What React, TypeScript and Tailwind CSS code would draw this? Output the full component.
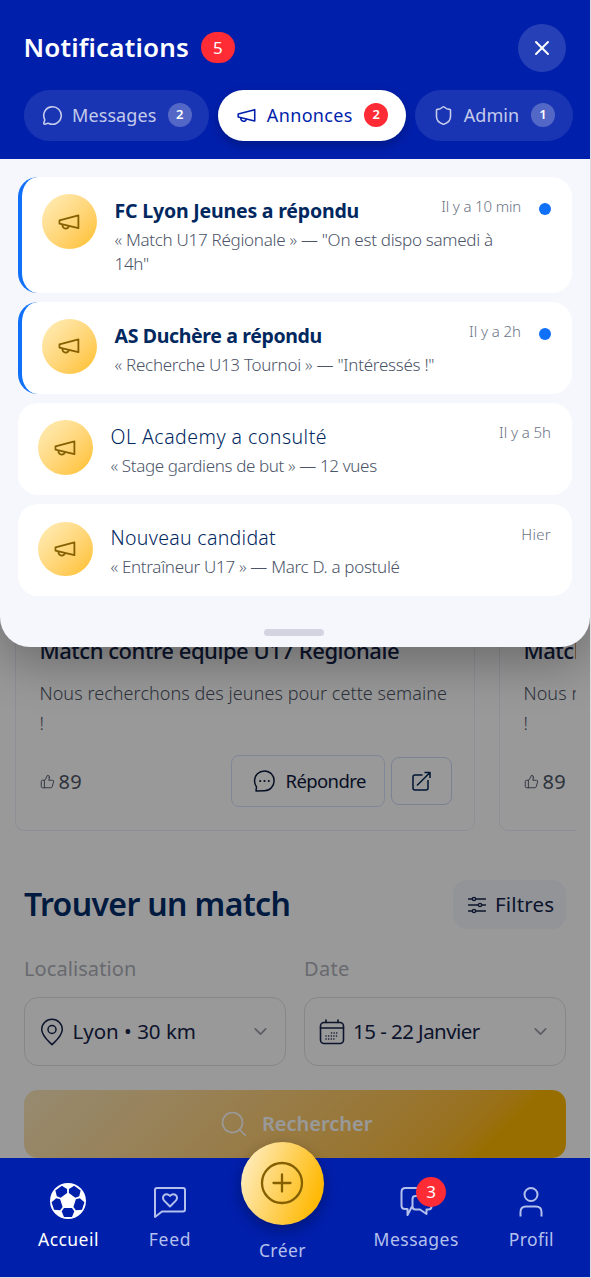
import { ChevronDown, MessageCircle, Shield, ThumbsUp, X } from "lucide-react";
import clsx from "clsx";

type Notification = {
  title: string;
  lines: string[];
  time: string;
  unread: boolean;
  titleClass: string;
  lineClass: string;
  timeClass: string;
};

const notifications: Notification[] = [
  {
    title: "FC Lyon Jeunes a répondu",
    lines: ["« Match U17 Régionale » — \"On est dispo samedi à", "14h\""],
    time: "Il y a 10 min",
    unread: true,
    titleClass: "tracking-[-0.19px]",
    lineClass: "tracking-[-0.29px]",
    timeClass: "tracking-[-0.16px]",
  },
  {
    title: "AS Duchère a répondu",
    lines: ["« Recherche U13 Tournoi » — \"Intéressés !\""],
    time: "Il y a 2h",
    unread: true,
    titleClass: "tracking-[-0.36px]",
    lineClass: "tracking-[-0.27px]",
    timeClass: "tracking-[-0.06px]",
  },
  {
    title: "OL Academy a consulté",
    lines: ["« Stage gardiens de but » — 12 vues"],
    time: "Il y a 5h",
    unread: false,
    titleClass: "tracking-[0.48px]",
    lineClass: "tracking-[-0.37px]",
    timeClass: "tracking-[-0.06px]",
  },
  {
    title: "Nouveau candidat",
    lines: ["« Entraîneur U17 » — Marc D. a postulé"],
    time: "Hier",
    unread: false,
    titleClass: "tracking-[0.3px]",
    lineClass: "tracking-[-0.31px]",
    timeClass: "tracking-[0.3px]",
  },
];

function NotificationCard({ item }: { item: Notification }) {
  return (
    <div
      className={clsx(
        "flex rounded-[20px] bg-white py-[17.5px] px-[20.5px]",
        item.unread && "border-l-[4.5px] border-[#1070f8]"
      )}
    >
      <div className="w-[54.5px] h-[54.5px] shrink-0 rounded-full bg-linear-135 from-[#ffeeba] to-[#ffbf18] flex items-center justify-center text-[#856000]">
        <MegaphoneIcon className="w-6 h-6" />
      </div>
      <div className="ml-[18px] flex-1 min-w-0 whitespace-nowrap">
        <div className="flex items-start justify-between">
          <h3
            className={clsx(
              "pt-[1.5px] text-[19.5px] leading-[30px] text-[#00285f]",
              item.unread ? "font-bold" : "font-light",
              item.titleClass
            )}
          >
            {item.title}
          </h3>
          <span className={clsx("pt-px text-[15px] leading-[23.5px] font-light text-[#6b7385]", item.timeClass)}>
            {item.time}
          </span>
        </div>
        <p className={clsx("mt-[2px] text-[17px] leading-[23.7px] font-light text-[#4b5468]", item.lineClass)}>
          {item.lines.map((line) => (
            <span key={line} className="block">{line}</span>
          ))}
        </p>
      </div>
      {item.unread && <span className="ml-[18px] mt-[9px] w-3 h-3 shrink-0 rounded-full bg-[#1070f8]" />}
    </div>
  );
}

function MegaphoneIcon({ className }: { className?: string }) {
  return (
    <svg viewBox="0 0 24 24" className={className} fill="none" stroke="currentColor" strokeWidth="1.8" strokeLinejoin="round">
      <path d="M2.500 10.400 21.400 5.300v12.900L2.500 13.700z" />
      <path d="M5.400 14.400c-.2 5 6 5.600 6.400 1.400" />
    </svg>
  );
}

function PostCard() {
  return (
    <article className="w-[460px] h-[331px] shrink-0 flex flex-col justify-end rounded-[9px] border border-[#eceff9] pl-[23.5px] pr-[22.5px] pb-[23px] whitespace-nowrap">
      <h2 className="mb-[13px] text-[22px] leading-[30px] font-medium tracking-[-0.46px] text-[#14234a]">
        Match contre équipe U17 Régionale
      </h2>
      <p className="text-[18px] leading-[30px] font-light tracking-[0.06px] text-[#4d5568]">
        <span className="block">Nous recherchons des jeunes pour cette semaine</span>
        <span className="block">!</span>
      </p>
      <div className="mt-[17.5px] flex h-[52px] items-center">
        <ThumbsUp className="w-[15px] h-[15px] text-[#4d5568]" strokeWidth={1.5} />
        <span className="mt-px ml-1 text-[20px] leading-7 tracking-[0.3px] text-[#4d5568]">89</span>
        <button className="ml-auto flex h-[52px] w-[154px] items-center rounded-lg border border-[#d6e2fa] pl-[20px] text-[#0d1a3d]">
          <svg viewBox="0 0 24 24" className="w-6 h-6" fill="none" stroke="currentColor" strokeWidth="1.5" strokeLinecap="round" strokeLinejoin="round">
            <path d="M12.500 2C7 2 2.500 6.200 2.500 11.700c0 3 1.200 5 2 6.200L4 22l8.500-.2c5.500 0 9.600-4.600 9.600-10C22.100 6.300 18 2 12.500 2z" />
            <path d="M8.200 12h.01M12.500 12h.01M16.800 12h.01" strokeWidth="2.200" />
          </svg>
          <span className="ml-[10px] text-[18.500px] tracking-[-0.6px]">Répondre</span>
        </button>
        <button className="ml-[6px] flex h-[48px] w-[61px] items-center justify-center rounded-lg border border-[#ccdaf7] text-[#002456]">
          <svg viewBox="0 0 20 20" className="w-5 h-5" fill="none" stroke="currentColor" strokeWidth="1.500" strokeLinejoin="round">
            <path d="M11.500 4H4a2 2 0 0 0-2 2v11a2 2 0 0 0 2 2h11a2 2 0 0 0 2-2V9" />
            <path d="M6 14.500 19 1.500M13.500 1.500H19V7" />
          </svg>
        </button>
      </div>
    </article>
  );
}

function FootballIcon() {
  const angles = [0, 72, 144, 216, 288];
  return (
    <svg viewBox="-54 -54 108 108" className="w-9 h-9">
      <circle r="54" fill="#fff" />
      {angles.map((a) => (
        <path key={a} d="M-12 21H12L19 31 12 48H-12L-19 31Z" fill="#001fab" transform={`rotate(${a})`} />
      ))}
    </svg>
  );
}

function Sheet() {
  return (
    <section className="absolute inset-x-0 top-0 h-[647px] rounded-b-[30px] bg-[#f5f7fc] shadow-[0_16px_50px_rgba(0,0,0,0.3)]">
      <header className="h-[158.5px] bg-[#001fab] pl-[23.5px] pr-[17px] pt-[23.5px]">
        <div className="flex items-center pr-[7px]">
          <h1 className="-mt-px text-[26px] leading-[36px] font-semibold tracking-[0.17px] text-white">Notifications</h1>
          <span className="ml-3 flex h-[31px] w-[34px] items-center justify-center rounded-full bg-[#ff2c36] text-[17px] text-white">
            5
          </span>
          <button className="ml-auto flex h-12 w-12 items-center justify-center rounded-full bg-white/15 text-white">
            <X size={24} strokeWidth={2} />
          </button>
        </div>
        <div className="mt-[18px] flex gap-[9px] text-[18px] text-white/75">
          <button className="flex h-[51px] w-[186px] items-center rounded-full bg-white/10 pl-[18px]">
            <MessageCircle size={21} strokeWidth={1.8} />
            <span className="ml-[9.5px] tracking-[0.1px]">Messages</span>
            <span className="ml-auto mr-[17.5px] flex h-6 w-6 items-center justify-center rounded-full bg-white/25 text-[13px] font-semibold text-white">2</span>
          </button>
          <button className="flex h-[51px] w-[188px] items-center rounded-full bg-white pl-[18px] text-[#001fab] shadow-[0_4px_10px_rgba(0,0,0,0.22)]">
            <MegaphoneIcon className="w-[21px] h-[21px]" />
            <span className="ml-[9.5px] tracking-[0.35px]">Annonces</span>
            <span className="ml-auto mr-[18px] flex h-6 w-6 items-center justify-center rounded-full bg-[#ff2c36] text-[13px] font-semibold text-white">2</span>
          </button>
          <button className="flex h-[51px] w-[158px] items-center rounded-full bg-white/10 pl-[18px]">
            <Shield size={21} strokeWidth={1.8} />
            <span className="ml-[9.5px] tracking-[0.1px]">Admin</span>
            <span className="ml-auto mr-[18px] flex h-6 w-6 items-center justify-center rounded-full bg-white/25 text-[13px] font-semibold text-white">1</span>
          </button>
        </div>
      </header>
      <div className="flex flex-col gap-[9px] pt-[18.3px] pl-[17.5px] pr-[18.5px]">
        {notifications.map((item) => (
          <NotificationCard key={item.title} item={item} />
        ))}
      </div>
      <div className="ml-[264px] mt-[33px] h-[6.5px] w-[60px] rounded-full bg-[#d3d4e0]" />
    </section>
  );
}

function BottomNav() {
  return (
    <nav className="absolute inset-x-0 bottom-0 flex h-[119px] items-start justify-between bg-[#001fab] pl-[38px] pr-[36px] text-[17.5px] leading-6 text-[#b4c0ec]">
      <a className="mt-[25px] flex flex-col items-center text-white">
        <FootballIcon />
        <span className="mt-[8px] tracking-[0.45px]">Accueil</span>
      </a>
      <a className="mt-[25px] flex flex-col items-center">
        <svg viewBox="0 0 36 36" className="w-9 h-9" fill="none" stroke="currentColor" strokeWidth="2" strokeLinejoin="round">
          <path d="M5 5h26a2 2 0 0 1 2 2v19.500a2 2 0 0 1-2 2H10L3 34V7a2 2 0 0 1 2-2z" />
          <path d="m18 23.500-5.600-5.600c-1.800-1.800-1.800-4.200-.3-5.600 1.600-1.500 4.300-1.400 5.900.7 1.600-2.100 4.300-2.200 5.900-.7 1.500 1.400 1.500 3.800-.3 5.600z" />
        </svg>
        <span className="mt-[8px] tracking-[0.7px]">Feed</span>
      </a>
      <a className="-mt-4 flex flex-col items-center">
        <span className="flex h-[82.5px] w-[82.5px] items-center justify-center rounded-full bg-linear-[110deg] from-[#ffeec4] from-5% to-[#ffba08] to-85% text-[#856000] shadow-[0_5px_14px_rgba(0,0,0,0.3)]">
          <svg viewBox="0 0 44 44" className="h-11 w-11" fill="none" stroke="currentColor" strokeWidth="2.300" strokeLinecap="round">
            <circle cx="22" cy="22" r="20" />
            <path d="M22 13.500v17M13.500 22h17" />
          </svg>
        </span>
        <span className="mt-[13px] tracking-[0.4px]">Créer</span>
      </a>
      <a className="mt-[25px] flex flex-col items-center">
        <span className="relative">
          <svg viewBox="0 0 36 36" className="w-9 h-9" fill="none" stroke="currentColor" strokeWidth="2" strokeLinejoin="round">
            <path d="M14 23.500 9.500 32v-6H7c-2 0-3.500-1.500-3.500-3.500V9c0-2.500 1.500-4 4-4h18c2.500 0 4 1.500 4 4v4" />
            <path d="M14.500 16c0-2 1-3 3-3h13c2 0 3 1 3 3v7.500c0 2-1 3-3 3H28.500V31L22 26.500h-4.500c-2 0-3-1-3-3z" />
          </svg>
          <span className="absolute -top-[6px] left-[18px] flex h-[30px] w-[30px] items-center justify-center rounded-full bg-[#ff2c36] text-[17px] text-white">
            3
          </span>
        </span>
        <span className="mt-[8px] tracking-[0.5px]">Messages</span>
      </a>
      <a className="mt-[25px] flex flex-col items-center">
        <svg viewBox="0 0 36 36" className="w-9 h-9" fill="none" stroke="currentColor" strokeWidth="2" strokeLinejoin="round">
          <circle cx="18" cy="11.500" r="6.500" />
          <path d="M7.500 33.500v-4.500c0-3.500 2-5.500 5.500-5.500h10c3.500 0 5.500 2 5.500 5.500v4.500" />
        </svg>
        <span className="mt-[8px] tracking-[0.35px]">Profil</span>
      </a>
    </nav>
  );
}

export default function App() {
  return (
    <div className="h-[1278px] w-[591px] bg-[#dcdce0] font-['Noto_Sans',sans-serif]">
      <div className="relative h-[1277px] w-[590px] overflow-hidden bg-white">
        <main className="pt-[500px]">
          {/* Posts */}
          <div className="ml-[15px] mr-[14px] flex gap-6 overflow-hidden">
            <PostCard />
            <PostCard />
          </div>

          {/* Find a match */}
          <section className="mt-[49px] px-6">
            <div className="flex items-center justify-between">
              <h2 className="-mt-[2px] text-[32px] leading-[44px] font-semibold tracking-[-0.64px] text-[#002d69]">Trouver un match</h2>
              <button className="flex h-[49px] w-[113px] items-center rounded-[14px] bg-[#f3f7fe] pl-[15px] text-[#14234a]">
                <svg viewBox="0 0 18 18" className="w-[18px] h-[18px]" fill="none" stroke="currentColor" strokeWidth="1.400" strokeLinecap="round">
                  <path d="M.5 3h3.700M7.800 3h9.700M.5 9h9.700M13.800 9h3.700M.5 15h3.700M7.800 15h9.700" />
                  <circle cx="6" cy="3" r="1.600" />
                  <circle cx="12" cy="9" r="1.600" />
                  <circle cx="6" cy="15" r="1.600" />
                </svg>
                <span className="ml-[9px] text-[20.500px] tracking-[0.15px]">Filtres</span>
              </button>
            </div>
            <div className="mt-[26px] grid grid-cols-2 gap-[18px]">
              <div>
                <p className="text-[20px] leading-7 tracking-[0.08px] text-[#aeb0ba]">Localisation</p>
                <button className="mt-[14px] flex h-[69px] w-full items-center rounded-[14px] border border-[#e0e1e5] pl-[15px] pr-[14px] text-[#14234a]">
                  <svg viewBox="0 0 24 28" className="w-6 h-7" fill="none" stroke="currentColor" strokeWidth="1.500" strokeLinejoin="round">
                    <path d="M12 26.800c-4-4.100-10.300-9.200-10.300-15.300a10.300 10.300 0 0 1 20.600 0c0 6.100-6.300 11.200-10.300 15.300z" />
                    <circle cx="12" cy="11.500" r="4" />
                  </svg>
                  <span className="ml-[8.500px] text-[20.500px]">Lyon • 30 km</span>
                  <ChevronDown className="ml-auto text-[#9a9ca8]" size={21} strokeWidth={2} />
                </button>
              </div>
              <div>
                <p className="text-[20px] leading-7 tracking-[0.3px] text-[#aeb0ba]">Date</p>
                <button className="mt-[14px] flex h-[69px] w-full items-center rounded-[14px] border border-[#e0e1e5] pl-[14px] pr-[14px] text-[#14234a]">
                  <svg viewBox="0 0 26 26" className="w-[26px] h-[26px]" fill="none" stroke="currentColor" strokeWidth="1.600" strokeLinecap="round">
                    <rect x="1.500" y="3.500" width="23" height="21" rx="3.500" />
                    <path d="M1.500 9h23M7 1v2.500M19 1v2.500" />
                    <path d="M12.500 14h7.500M7 17h13M7 20h8" strokeWidth="1.500" strokeDasharray="0.1 2.500" />
                  </svg>
                  <span className="ml-[8px] text-[20.500px] tracking-[-0.55px]">15 - 22 Janvier</span>
                  <ChevronDown className="ml-auto text-[#9a9ca8]" size={21} strokeWidth={2} />
                </button>
              </div>
            </div>
            <button className="mt-6 flex h-[68px] w-full items-center justify-center rounded-[14px] bg-linear-135 from-[#fbe7bb] to-[#ffb800] to-85% pl-[4px] text-[20px] font-semibold text-white">
              <svg viewBox="0 0 26 26" className="w-[26px] h-[26px]" fill="none" stroke="currentColor" strokeWidth="1.600" strokeLinecap="round">
                <circle cx="11.500" cy="11.500" r="10" />
                <path d="m18.500 18.500 6 6" />
              </svg>
              <span className="ml-[14.500px]">Rechercher</span>
            </button>
          </section>
        </main>

        <div className="absolute inset-0 bg-black/40" />
        <Sheet />
        <BottomNav />
      </div>
    </div>
  );
}
